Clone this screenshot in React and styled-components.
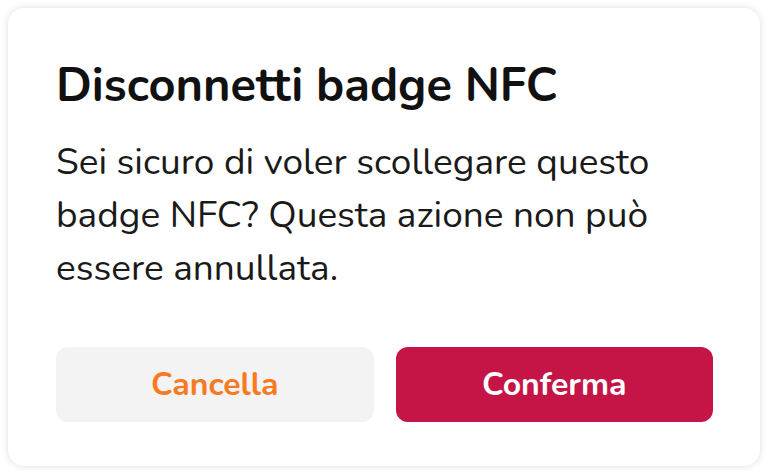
import React from 'react';
import styled, { createGlobalStyle } from 'styled-components';

const GlobalStyle = createGlobalStyle`
  html, body {
    margin: 0;
    padding: 0;
    background: #ffffff;
    font-family: "Nunito", Lato, "Open Sans", sans-serif;
  }
`;

function App() {
    return (
        <>
            <GlobalStyle />
            <Page>
                <Dialog>
                    <Title>Disconnetti badge NFC</Title>
                    <Message>
                        Sei sicuro di voler scollegare questo<br />
                        badge NFC? Questa azione non può<br />
                        essere annullata.
                    </Message>
                    <Actions>
                        <Button>Cancella</Button>
                        <Button primary>Conferma</Button>
                    </Actions>
                </Dialog>
            </Page>
        </>
    )
}

export default App

export const Page = styled.div`
  width: 768px;
  height: 474px;
  padding: 8px;
  box-sizing: border-box;
`;

export const Dialog = styled.div`
  height: 100%;
  box-sizing: border-box;
  background: #fff;
  border-radius: 16px;
  box-shadow: 0 0 7px rgba(0, 0, 0, 0.14);
  padding: 50px 47px 44px 48px;
  display: flex;
  flex-direction: column;
`;

export const Title = styled.h2`
  margin: 0;
  font-size: 47px;
  line-height: 56px;
  font-weight: 700;
  color: #111;
`;

export const Message = styled.p`
  margin: 22px 0 0;
  font-size: 37px;
  line-height: 53px;
  color: #1a1a1a;
`;

export const Actions = styled.div`
  margin-top: auto;
  display: grid;
  grid-template-columns: 1fr 1fr;
  gap: 22px;
`;

export const Button = styled.button`
  height: 75px;
  border: none;
  border-radius: 12px;
  font-family: inherit;
  font-size: 32px;
  font-weight: 700;
  background: ${p => (p.primary ? '#c41546' : '#f3f3f3')};
  color: ${p => (p.primary ? '#ffffff' : '#f77a22')};
`;
